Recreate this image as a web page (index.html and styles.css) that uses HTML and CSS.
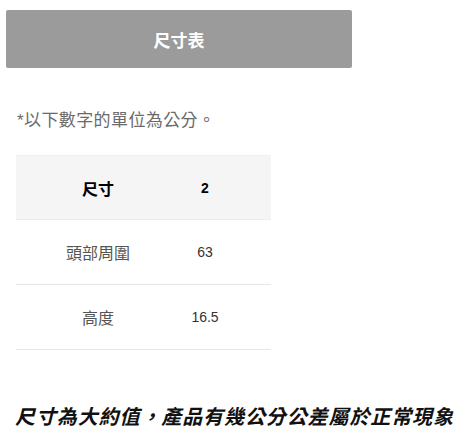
FILE: index.html
```html
<!DOCTYPE html>
<html lang="zh-Hant">
<head>
<meta charset="utf-8">
<link rel="stylesheet" href="styles.css">
</head>
<body>
<div class="page">
  <div class="btn">尺寸表</div>
  <p class="note">*以下數字的單位為公分。</p>
  <div class="table">
    <div class="row head">
      <div class="c1">尺寸</div>
      <div class="c2">2</div>
    </div>
    <div class="row">
      <div class="c1">頭部周圍</div>
      <div class="c2">63</div>
    </div>
    <div class="row">
      <div class="c1">高度</div>
      <div class="c2">16.5</div>
    </div>
  </div>
  <p class="disclaimer">尺寸為大約值，產品有幾公分公差屬於正常現象</p>
</div>
</body>
</html>
```

FILE: styles.css
```css
* { box-sizing: border-box; }
html, body { margin: 0; padding: 0; background: #fff; }
body {
  font-family: "Liberation Sans", "Noto Sans CJK TC", sans-serif;
  color: #333;
}
.page {
  padding: 10px 0 0 6px;
}
.btn {
  width: 346px;
  height: 58px;
  background: #9b9b9b;
  border-radius: 2px;
  color: #fff;
  font-weight: bold;
  font-size: 17px;
  display: flex;
  align-items: center;
  justify-content: center;
}
.note {
  margin: 42px 0 0 11px;
  font-size: 17px;
  line-height: 22px;
  letter-spacing: 0.4px;
  color: #6a6a6a;
}
.table {
  margin: 23px 0 0 10px;
  width: 255px;
}
.row {
  display: grid;
  grid-template-columns: 164px 50px 1fr;
  height: 65px;
  align-items: center;
  border-bottom: 1px solid #e6e6e6;
  font-size: 14px;
  color: #333;
}
.row.head {
  height: 65px;
  background: #f5f5f5;
  border-top: 1px solid #f0f0f0;
  border-bottom-color: #ececec;
  color: #000;
  font-weight: bold;
}
.row .c1 { text-align: center; color: #555; font-size: 16px; }
.row.head .c1 { color: #000; font-weight: bold; }
.row .c2 { text-align: center; }
.disclaimer {
  margin: 53px 0 0 9px;
  font-family: "Noto Sans CJK TC", sans-serif;
  font-size: 20px;
  line-height: 26px;
  letter-spacing: 0.9px;
  font-weight: bold;
  font-style: italic;
  color: #111;
  white-space: nowrap;
}
```
